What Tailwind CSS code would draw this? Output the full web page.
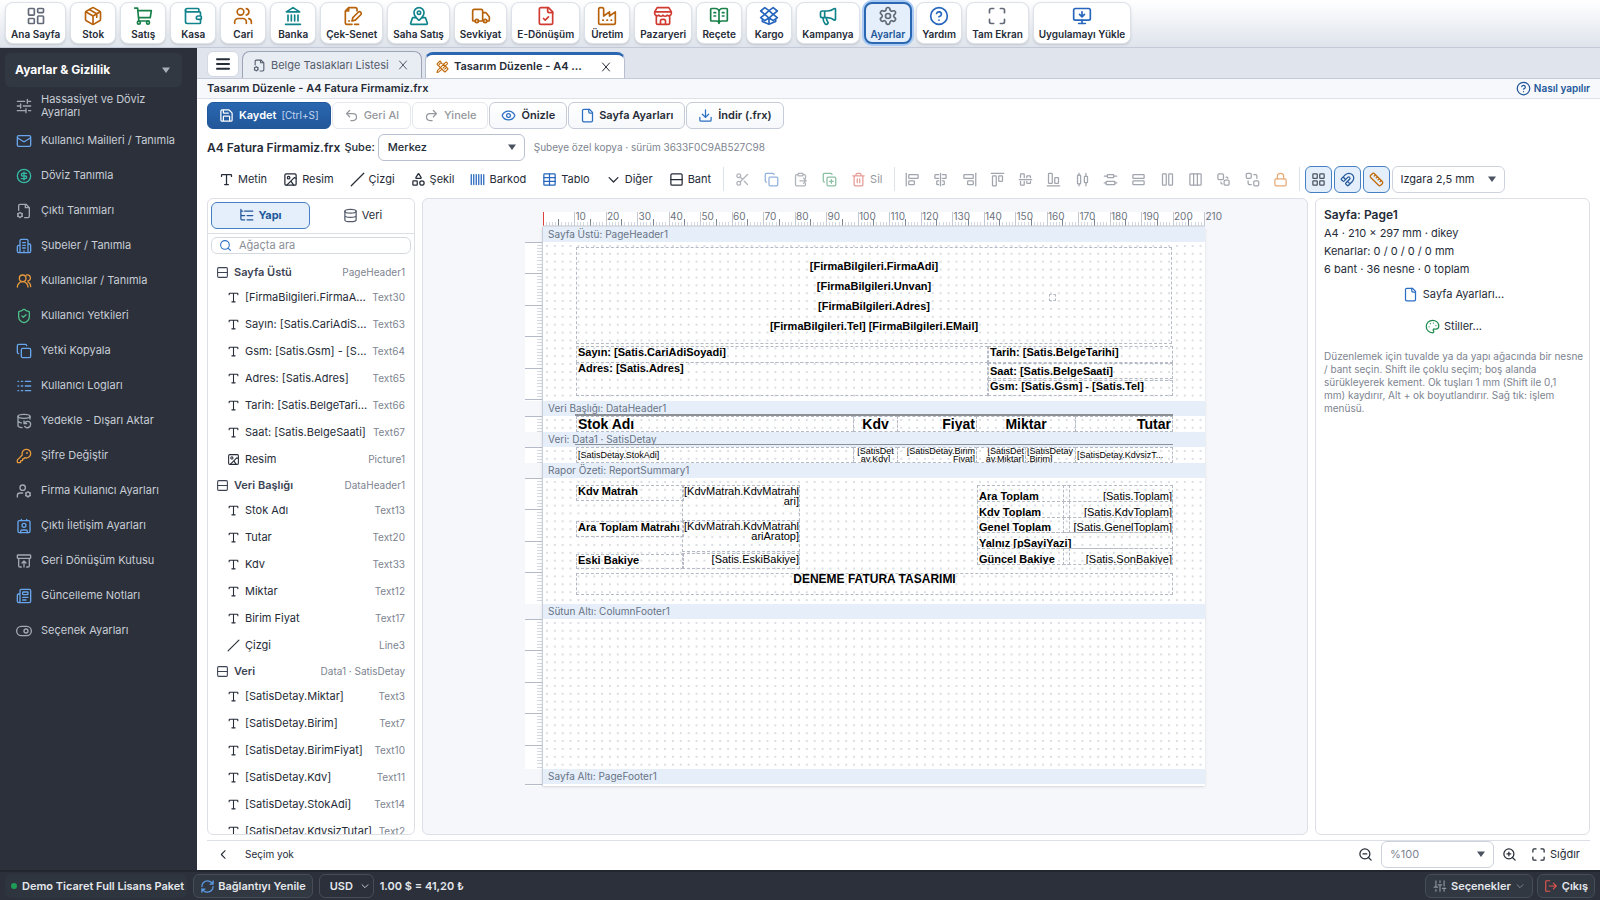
<!DOCTYPE html>
<html lang="tr">

<head>
    <meta charset="UTF-8">
    <meta name="viewport" content="width=device-width, initial-scale=1.0">
    <title>Tasarım Düzenle</title>
    <script src="https://cdn.jsdelivr.net/npm/@tailwindcss/browser@4"></script>
    <style>
        /* Shared stroke settings for every line icon */
        symbol {
            fill: none;
            stroke: currentColor;
            stroke-width: 2;
            stroke-linecap: round;
            stroke-linejoin: round;
        }
    </style>
</head>

<body class="h-screen flex flex-col overflow-hidden bg-white text-[#252b37] text-[11px] font-['Inter',sans-serif]">

    <!-- Icon sprite -->
    <svg class="hidden">
        <symbol id="i-home" viewBox="0 0 24 24"><rect x="3" y="3" width="7" height="8" rx="1"/><rect x="14" y="3" width="7" height="5" rx="1"/><rect x="14" y="12" width="7" height="9" rx="1"/><rect x="3" y="15" width="7" height="6" rx="1"/></symbol>
        <symbol id="i-box" viewBox="0 0 24 24"><path d="M21 8a2 2 0 0 0-1-1.73l-7-4a2 2 0 0 0-2 0l-7 4A2 2 0 0 0 3 8v8a2 2 0 0 0 1 1.73l7 4a2 2 0 0 0 2 0l7-4A2 2 0 0 0 21 16Z"/><path d="m3.3 7 8.7 5 8.7-5M12 22V12M7.5 4.3l9 5.1v4"/></symbol>
        <symbol id="i-cart" viewBox="0 0 24 24"><circle cx="7" cy="20" r="1.8"/><circle cx="18" cy="20" r="1.8"/><path d="M2 2.5h3.5L7 18h12M6 5.5h16l-1.3 8.5H6.8"/></symbol>
        <symbol id="i-wallet" viewBox="0 0 24 24"><path d="M19 7V4a1 1 0 0 0-1-1H5a2 2 0 0 0 0 4h15a1 1 0 0 1 1 1v4h-3a2 2 0 0 0 0 4h3a1 1 0 0 0 1-1v-2a1 1 0 0 0-1-1"/><path d="M3 5v14a2 2 0 0 0 2 2h15a1 1 0 0 0 1-1v-4"/></symbol>
        <symbol id="i-users" viewBox="0 0 24 24"><circle cx="9" cy="7" r="4"/><path d="M2 21v-2a4 4 0 0 1 4-4h6a4 4 0 0 1 4 4v2M16 3.1a4 4 0 0 1 0 7.8M22 21v-2a4 4 0 0 0-3-3.9"/></symbol>
        <symbol id="i-bank" viewBox="0 0 24 24"><path d="M3 22h18M6 18v-7M10 18v-7M14 18v-7M18 18v-7M12 2l8 5H4z"/></symbol>
        <symbol id="i-cheque" viewBox="0 0 24 24"><path d="M18 6V4a2 2 0 0 0-2-2H8L4 6v14a2 2 0 0 0 2 2h6M8 18h1M4 6h4V2"/><path d="m12 18 1-4 6.500-6.500a2 2 0 0 1 3 3L16 17zM15 22h5"/></symbol>
        <symbol id="i-mappin" viewBox="0 0 24 24"><path d="M18 8c0 3.600-3.900 7.400-5.300 8.700a1 1 0 0 1-1.400 0C9.900 15.400 6 11.600 6 8a6 6 0 0 1 12 0"/><circle cx="12" cy="8" r="2"/><path d="M8.700 14H5a1 1 0 0 0-1 .7l-2 6a1 1 0 0 0 1 1.300h18a1 1 0 0 0 1-1.300l-2-6a1 1 0 0 0-1-.7h-3.700"/></symbol>
        <symbol id="i-truck" viewBox="0 0 24 24"><path d="M14 18V6a2 2 0 0 0-2-2H4a2 2 0 0 0-2 2v11a1 1 0 0 0 1 1h2M15 18H9M19 18h2a1 1 0 0 0 1-1v-3.600a1 1 0 0 0-.2-.6l-3.500-4.400a1 1 0 0 0-.8-.4H14"/><circle cx="17" cy="18" r="2"/><circle cx="7" cy="18" r="2"/></symbol>
        <symbol id="i-filecheck" viewBox="0 0 24 24"><path d="M15 2H6a2 2 0 0 0-2 2v16a2 2 0 0 0 2 2h12a2 2 0 0 0 2-2V7Z"/><path d="M14 2v4a2 2 0 0 0 2 2h4M9 15l2 2 4-4"/></symbol>
        <symbol id="i-factory" viewBox="0 0 24 24"><path d="M2 20a2 2 0 0 0 2 2h16a2 2 0 0 0 2-2V7l-7 5V7l-7 5V4a2 2 0 0 0-2-2H4a2 2 0 0 0-2 2ZM7 17h.5M12 17h.5M17 17h.5"/></symbol>
        <symbol id="i-store" viewBox="0 0 24 24"><path d="m5 2-3 5v2a3 3 0 0 0 5 2 3 3 0 0 0 5 0 3 3 0 0 0 5 0 3 3 0 0 0 5-2V7l-3-5ZM2 7h20M4 12v8a2 2 0 0 0 2 2h12a2 2 0 0 0 2-2v-8M9 22v-4a2 2 0 0 1 2-2h2a2 2 0 0 1 2 2v4"/></symbol>
        <symbol id="i-book" viewBox="0 0 24 24"><path d="M12 7v14M16 12h2M16 8h2M6 12h2M6 8h2M3 18a1 1 0 0 1-1-1V4a1 1 0 0 1 1-1h5a4 4 0 0 1 4 4 4 4 0 0 1 4-4h5a1 1 0 0 1 1 1v13a1 1 0 0 1-1 1h-6a3 3 0 0 0-3 3 3 3 0 0 0-3-3z"/></symbol>
        <symbol id="i-openbox" viewBox="0 0 24 24"><path d="m7 2 5 3.500L17 2l5 4-5 4-5-4.500L7 10 2 6zM12 14.500 7 10l-5 4 5 3.500zM12 14.500l5-4.500 5 4-5 3.500zM4 16v2.500l8 3.500 8-3.500V16M12 14.500V22"/></symbol>
        <symbol id="i-megaphone" viewBox="0 0 24 24"><path d="M11 6a13 13 0 0 0 8.400-2.800A1 1 0 0 1 21 4v12a1 1 0 0 1-1.600.8A13 13 0 0 0 11 14H5a2 2 0 0 1-2-2V8a2 2 0 0 1 2-2zM6 14a12 12 0 0 0 2.400 7.200 2 2 0 0 0 3.200-2.400A8 8 0 0 1 10 14M8 6v8"/></symbol>
        <symbol id="i-gear" viewBox="0 0 24 24"><path d="M9.700 4.100a2.300 2.300 0 0 1 4.600 0 2.300 2.300 0 0 0 3.300 1.900 2.300 2.300 0 0 1 2.300 4 2.300 2.300 0 0 0 0 3.900 2.300 2.300 0 0 1-2.300 4 2.300 2.300 0 0 0-3.300 1.900 2.300 2.300 0 0 1-4.600 0 2.300 2.300 0 0 0-3.300-1.900 2.300 2.300 0 0 1-2.300-4 2.300 2.300 0 0 0 0-3.900 2.300 2.300 0 0 1 2.300-4 2.300 2.300 0 0 0 3.300-1.900"/><circle cx="12" cy="12" r="3"/></symbol>
        <symbol id="i-help" viewBox="0 0 24 24"><circle cx="12" cy="12" r="10"/><path d="M9.100 9a3 3 0 0 1 5.800 1c0 2-3 3-3 3M12 17h.01"/></symbol>
        <symbol id="i-screen" viewBox="0 0 24 24"><path d="M8 3H5a2 2 0 0 0-2 2v3M21 8V5a2 2 0 0 0-2-2h-3M3 16v3a2 2 0 0 0 2 2h3M16 21h3a2 2 0 0 0 2-2v-3"/></symbol>
        <symbol id="i-install" viewBox="0 0 24 24"><rect x="2" y="3" width="20" height="14" rx="2"/><path d="m9 10 3 3 3-3M12 13V7M12 17v4M8 21h8"/></symbol>
        <symbol id="i-sliders" viewBox="0 0 24 24"><path d="M2 5h11M17 5h5M17 2v6M2 12h5M11 12h11M7 9v6M2 19h13M19 19h3M15 16v6"/></symbol>
        <symbol id="i-mail" viewBox="0 0 24 24"><rect x="2" y="4" width="20" height="16" rx="2"/><path d="m2.500 7.500 8.500 5.300a2 2 0 0 0 2 0l8.500-5.300"/></symbol>
        <symbol id="i-dollar" viewBox="0 0 24 24"><circle cx="12" cy="12" r="10"/><path d="M16 8h-6a2 2 0 1 0 0 4h4a2 2 0 1 1 0 4H8M12 18V6"/></symbol>
        <symbol id="i-filecog" viewBox="0 0 24 24"><path d="M4 11V4a2 2 0 0 1 2-2h9l5 5v13a2 2 0 0 1-2 2h-5M14 2v5h6"/><circle cx="6" cy="18" r="3.200"/><path d="M6 14v.5M6 21.500v.5M2.500 16l.5.300M9 19.700l.5.300M2.500 20l.5-.3M9 16.300l.5-.3"/></symbol>
        <symbol id="i-building" viewBox="0 0 24 24"><path d="M6 22V4a2 2 0 0 1 2-2h8a2 2 0 0 1 2 2v18M6 11H4a2 2 0 0 0-2 2v7a2 2 0 0 0 2 2h16a2 2 0 0 0 2-2v-9a2 2 0 0 0-2-2h-2M10 7h4M10 11h4M10 15h4M12 22v-3"/></symbol>
        <symbol id="i-usersround" viewBox="0 0 24 24"><circle cx="10" cy="8" r="5"/><path d="M2 21a8 8 0 0 1 16 0M18 12a4.500 4.500 0 0 0-2-9M18 13.500c3 1.500 4 4 4 7"/></symbol>
        <symbol id="i-shield" viewBox="0 0 24 24"><path d="M20 13c0 5-3.500 7.500-7.700 9a1 1 0 0 1-.6 0C7.500 20.500 4 18 4 13V6a1 1 0 0 1 1-1c2 0 4.500-1.200 6.200-2.700a1.200 1.200 0 0 1 1.600 0C14.500 3.800 17 5 19 5a1 1 0 0 1 1 1zM9 12l2 2 4-4"/></symbol>
        <symbol id="i-copy" viewBox="0 0 24 24"><rect x="8" y="8" width="14" height="14" rx="2"/><path d="M4 16a2 2 0 0 1-2-2V4a2 2 0 0 1 2-2h10a2 2 0 0 1 2 2"/></symbol>
        <symbol id="i-logs" viewBox="0 0 24 24"><path d="M3 5h1M3 12h1M3 19h1M8 5h2M8 12h2M8 19h2M14 5h8M14 12h8M14 19h8"/></symbol>
        <symbol id="i-dbbackup" viewBox="0 0 24 24"><ellipse cx="12" cy="5" rx="9" ry="3"/><path d="M3 12a9 3 0 0 0 5 2.700M21 9V5M3 5v14a9 3 0 0 0 6 2.900M12 12v4h4M13 20a5 5 0 0 0 9-3 4.500 4.500 0 0 0-4.500-4.500c-1.300 0-2.500.5-3.400 1.400L12 16"/></symbol>
        <symbol id="i-key" viewBox="0 0 24 24"><path d="M2.600 17.400A2 2 0 0 0 2 18.800V21a1 1 0 0 0 1 1h3a1 1 0 0 0 1-1v-1a1 1 0 0 1 1-1h1a1 1 0 0 0 1-1v-1a1 1 0 0 1 1-1h.2a2 2 0 0 0 1.400-.6l.8-.8a6.500 6.500 0 1 0-4-4z"/><circle cx="16.500" cy="7.500" r=".5"/></symbol>
        <symbol id="i-usercog" viewBox="0 0 24 24"><circle cx="10" cy="7" r="4"/><path d="M2 21v-2a4 4 0 0 1 4-4h4"/><circle cx="18" cy="17" r="3.200"/><path d="M18 13v.5M18 20.500v.5M14.500 15l.5.300M21 18.700l.5.300M14.500 19l.5-.3M21 15.300l.5-.3"/></symbol>
        <symbol id="i-contact" viewBox="0 0 24 24"><path d="M16 2v2M8 2v2M7 22v-2a2 2 0 0 1 2-2h6a2 2 0 0 1 2 2v2"/><circle cx="12" cy="11" r="3"/><rect x="3" y="4" width="18" height="18" rx="2"/></symbol>
        <symbol id="i-restore" viewBox="0 0 24 24"><rect x="2" y="3" width="20" height="5" rx="1"/><path d="M4 8v11a2 2 0 0 0 2 2h2M20 8v11a2 2 0 0 1-2 2h-2M9 15l3-3 3 3M12 12v9"/></symbol>
        <symbol id="i-news" viewBox="0 0 24 24"><path d="M18 14h-8M15 18h-5M4 22h16a2 2 0 0 0 2-2V4a2 2 0 0 0-2-2H8a2 2 0 0 0-2 2v16a2 2 0 0 1-4 0v-9a2 2 0 0 1 2-2h2"/><rect x="10" y="6" width="8" height="4" rx="1"/></symbol>
        <symbol id="i-toggle" viewBox="0 0 24 24"><rect x="1" y="5" width="22" height="14" rx="7"/><circle cx="15" cy="12" r="3"/></symbol>
        <symbol id="i-design" viewBox="0 0 24 24"><path d="m13 7 8.700 8.700c.4.400.4 1 0 1.400l-4.600 4.600a1 1 0 0 1-1.400 0L7 13M10.800 17.200 5 22l-3 1 1-4L18 4a2.500 2.500 0 0 1 3 3l-8 8M11 7 8.300 2.300a1 1 0 0 0-1.400 0L2.300 6.900a1 1 0 0 0 0 1.400L6.500 12M8 6l-2 2M18 15l-2 2"/></symbol>
        <symbol id="i-save" viewBox="0 0 24 24"><path d="M15.200 3a2 2 0 0 1 1.400.6l3.800 3.800a2 2 0 0 1 .6 1.400V19a2 2 0 0 1-2 2H5a2 2 0 0 1-2-2V5a2 2 0 0 1 2-2zM17 21v-7a1 1 0 0 0-1-1H8a1 1 0 0 0-1 1v7M7 3v4a1 1 0 0 0 1 1h7"/></symbol>
        <symbol id="i-undo" viewBox="0 0 24 24"><path d="M9 14 4 9l5-5M4 9h10.500a5.500 5.500 0 0 1 0 11H11"/></symbol>
        <symbol id="i-redo" viewBox="0 0 24 24"><path d="m15 14 5-5-5-5M20 9H9.500a5.500 5.500 0 0 0 0 11H13"/></symbol>
        <symbol id="i-eye" viewBox="0 0 24 24"><path d="M2 12.300a1 1 0 0 1 0-.7 10.800 10.800 0 0 1 20 0 1 1 0 0 1 0 .7 10.800 10.800 0 0 1-20 0"/><circle cx="12" cy="12" r="3"/></symbol>
        <symbol id="i-file" viewBox="0 0 24 24"><path d="M15 2H6a2 2 0 0 0-2 2v16a2 2 0 0 0 2 2h12a2 2 0 0 0 2-2V7Z"/><path d="M14 2v4a2 2 0 0 0 2 2h4"/></symbol>
        <symbol id="i-download" viewBox="0 0 24 24"><path d="M12 15V3M21 15v4a2 2 0 0 1-2 2H5a2 2 0 0 1-2-2v-4M7 10l5 5 5-5"/></symbol>
        <symbol id="i-text" viewBox="0 0 24 24"><path d="M12 4v16M4 7V5a1 1 0 0 1 1-1h14a1 1 0 0 1 1 1v2M9 20h6"/></symbol>
        <symbol id="i-image" viewBox="0 0 24 24"><rect x="3" y="3" width="18" height="18" rx="2"/><circle cx="9" cy="9" r="2"/><path d="m21 10-3-1L6 21M13 15l4 6"/></symbol>
        <symbol id="i-line" viewBox="0 0 24 24"><path d="M22 2 2 22"/></symbol>
        <symbol id="i-shapes" viewBox="0 0 24 24"><path d="M8.300 10a.7.7 0 0 1-.6-1.100L11.400 3a.7.7 0 0 1 1.200 0l3.700 5.900a.7.7 0 0 1-.6 1.100Z"/><rect x="3" y="14" width="7" height="7" rx="1"/><circle cx="17.500" cy="17.500" r="3.500"/></symbol>
        <symbol id="i-barcode" viewBox="0 0 24 24"><path d="M2 4v16M6 4v16M10 4v16M14 4v16M18 4v16M22 4v16"/></symbol>
        <symbol id="i-table" viewBox="0 0 24 24"><rect x="3" y="3" width="18" height="18" rx="1"/><path d="M12 3v18M3 9h18M3 15h18"/></symbol>
        <symbol id="i-down" viewBox="0 0 24 24"><path d="m5 9 7 7 7-7"/></symbol>
        <symbol id="i-left" viewBox="0 0 24 24"><path d="m15 19-7-7 7-7"/></symbol>
        <symbol id="i-band" viewBox="0 0 24 24"><rect x="3" y="3" width="18" height="18" rx="2"/><path d="M3 12h18"/></symbol>
        <symbol id="i-cut" viewBox="0 0 24 24"><circle cx="6" cy="6" r="3"/><circle cx="6" cy="18" r="3"/><path d="M8.100 8.100 12 12M20 4 8.100 15.900M14.800 14.800 20 20"/></symbol>
        <symbol id="i-paste" viewBox="0 0 24 24"><rect x="8" y="2" width="8" height="4" rx="1"/><path d="M16 4h2a2 2 0 0 1 2 2v4M8 4H6a2 2 0 0 0-2 2v14a2 2 0 0 0 2 2h12a2 2 0 0 0 2-2v-2M11 14h10M17 10l4 4-4 4"/></symbol>
        <symbol id="i-dup" viewBox="0 0 24 24"><rect x="8" y="8" width="14" height="14" rx="2"/><path d="M15 12v6M12 15h6M4 16a2 2 0 0 1-2-2V4a2 2 0 0 1 2-2h10a2 2 0 0 1 2 2"/></symbol>
        <symbol id="i-trash" viewBox="0 0 24 24"><path d="M3 6h18M19 6v14a2 2 0 0 1-2 2H7a2 2 0 0 1-2-2V6M8 6V4a2 2 0 0 1 2-2h4a2 2 0 0 1 2 2v2M10 11v6M14 11v6"/></symbol>
        <symbol id="i-al" viewBox="0 0 24 24"><path d="M2 2v20"/><rect x="6" y="4" width="15" height="6" rx="1"/><rect x="6" y="14" width="9" height="6" rx="1"/></symbol>
        <symbol id="i-ac" viewBox="0 0 24 24"><path d="M12 2v20M9 10H4a1 1 0 0 1-1-1V5a1 1 0 0 1 1-1h5M15 10h5a1 1 0 0 0 1-1V5a1 1 0 0 0-1-1h-5M9 20H7a1 1 0 0 1-1-1v-4a1 1 0 0 1 1-1h2M15 14h2a1 1 0 0 1 1 1v4a1 1 0 0 1-1 1h-2"/></symbol>
        <symbol id="i-ar" viewBox="0 0 24 24"><path d="M22 2v20"/><rect x="3" y="4" width="15" height="6" rx="1"/><rect x="9" y="14" width="9" height="6" rx="1"/></symbol>
        <symbol id="i-at" viewBox="0 0 24 24"><path d="M2 2h20"/><rect x="4" y="6" width="6" height="16" rx="1"/><rect x="14" y="6" width="6" height="9" rx="1"/></symbol>
        <symbol id="i-am" viewBox="0 0 24 24"><path d="M2 12h20M10 15v5a1 1 0 0 1-1 1H5a1 1 0 0 1-1-1v-5M10 9V4a1 1 0 0 0-1-1H5a1 1 0 0 0-1 1v5M20 15v2a1 1 0 0 1-1 1h-4a1 1 0 0 1-1-1v-2M14 9V7a1 1 0 0 1 1-1h4a1 1 0 0 1 1 1v2"/></symbol>
        <symbol id="i-ab" viewBox="0 0 24 24"><path d="M2 22h20"/><rect x="4" y="2" width="6" height="16" rx="1"/><rect x="14" y="9" width="6" height="9" rx="1"/></symbol>
        <symbol id="i-dh" viewBox="0 0 24 24"><rect x="4" y="5" width="5" height="14" rx="1"/><rect x="15" y="7" width="5" height="10" rx="1"/><path d="M6.500 2v3M6.500 19v3M17.500 2v5M17.500 17v5"/></symbol>
        <symbol id="i-dv" viewBox="0 0 24 24"><rect x="7" y="4" width="10" height="5" rx="1"/><rect x="5" y="15" width="14" height="5" rx="1"/><path d="M2 6.500h5M17 6.500h5M2 17.500h3M19 17.500h3"/></symbol>
        <symbol id="i-sw" viewBox="0 0 24 24"><rect x="3" y="4" width="18" height="6" rx="1"/><rect x="3" y="14" width="18" height="6" rx="1"/></symbol>
        <symbol id="i-sh" viewBox="0 0 24 24"><rect x="4" y="3" width="6" height="18" rx="1"/><rect x="14" y="3" width="6" height="18" rx="1"/></symbol>
        <symbol id="i-cols" viewBox="0 0 24 24"><rect x="3" y="3" width="18" height="18" rx="1"/><path d="M9 3v18M15 3v18"/></symbol>
        <symbol id="i-front" viewBox="0 0 24 24"><rect x="3" y="3" width="9" height="9" rx="2"/><path d="M16 8h1a2 2 0 0 1 2 2M8 16v1a2 2 0 0 0 2 2"/><rect x="13" y="13" width="8" height="8" rx="2"/></symbol>
        <symbol id="i-back" viewBox="0 0 24 24"><rect x="2" y="2" width="8" height="8" rx="2"/><rect x="14" y="14" width="8" height="8" rx="2"/><path d="M14 4h3a2 2 0 0 1 2 2v4M5 14v4a2 2 0 0 0 2 2h3"/></symbol>
        <symbol id="i-lock" viewBox="0 0 24 24"><rect x="3" y="11" width="18" height="11" rx="2"/><path d="M7 11V7a5 5 0 0 1 10 0v4"/></symbol>
        <symbol id="i-grid" viewBox="0 0 24 24"><rect x="3" y="3" width="7" height="7" rx="1"/><rect x="14" y="3" width="7" height="7" rx="1"/><rect x="14" y="14" width="7" height="7" rx="1"/><rect x="3" y="14" width="7" height="7" rx="1"/></symbol>
        <symbol id="i-magnet" viewBox="0 0 24 24"><path d="m12 15 4 4M2.350 10.650a1.200 1.200 0 0 0 0 1.700l2.300 2.300a1.200 1.200 0 0 0 1.700 0l6.030-6.030a1 1 0 1 1 3 3l-6.030 6.030a1.200 1.200 0 0 0 0 1.700l2.300 2.300a1.200 1.200 0 0 0 1.700 0l6.370-6.370A1 1 0 0 0 8.720 4.280zM5 8l4 4"/></symbol>
        <symbol id="i-ruler" viewBox="0 0 24 24"><path d="M2.700 8.700a2.400 2.400 0 0 1 0-3.400l2.600-2.600a2.400 2.400 0 0 1 3.400 0l12.600 12.600a2.400 2.400 0 0 1 0 3.400l-2.600 2.600a2.400 2.400 0 0 1-3.400 0zM14.500 12.500l2-2M11.500 9.500l2-2M8.500 6.500l2-2M17.500 15.500l2-2"/></symbol>
        <symbol id="i-tree" viewBox="0 0 24 24"><path d="M9 5h13M13 12h9M13 19h9M3 2v15a2 2 0 0 0 2 2h4M3 10a2 2 0 0 0 2 2h4M3 5h3"/></symbol>
        <symbol id="i-db" viewBox="0 0 24 24"><ellipse cx="12" cy="5" rx="9" ry="3"/><path d="M3 5v14a9 3 0 0 0 18 0V5M3 12a9 3 0 0 0 18 0"/></symbol>
        <symbol id="i-search" viewBox="0 0 24 24"><circle cx="11" cy="11" r="8"/><path d="m21 21-4.300-4.300"/></symbol>
        <symbol id="i-zoomout" viewBox="0 0 24 24"><circle cx="11" cy="11" r="8"/><path d="m21 21-4.300-4.300M8 11h6"/></symbol>
        <symbol id="i-zoomin" viewBox="0 0 24 24"><circle cx="11" cy="11" r="8"/><path d="m21 21-4.300-4.300M8 11h6M11 8v6"/></symbol>
        <symbol id="i-palette" viewBox="0 0 24 24"><path d="M12 22a10 10 0 0 1 0-20 10 9 0 0 1 10 9 5 5 0 0 1-5 5h-2.200a1.700 1.700 0 0 0-1.400 2.800l.3.400a1.700 1.700 0 0 1-1.700 2.800M13.500 6.500h.01M17.500 10.500h.01M6.500 12.500h.01M8.500 7.500h.01"/></symbol>
        <symbol id="i-sync" viewBox="0 0 24 24"><path d="M3 12a9 9 0 0 1 9-9 9.700 9.700 0 0 1 6.700 2.700L21 8M21 3v5h-5M21 12a9 9 0 0 1-9 9 9.700 9.700 0 0 1-6.700-2.700L3 16M8 16H3v5"/></symbol>
        <symbol id="i-vsliders" viewBox="0 0 24 24"><path d="M5 3v11M5 18v3M2 14h6M12 3v3M12 10v11M9 10h6M19 3v9M19 16v5M16 16h6"/></symbol>
        <symbol id="i-exit" viewBox="0 0 24 24"><path d="M10 3H4a1 1 0 0 0-1 1v16a1 1 0 0 0 1 1h6M9 12h12M16 7l5 5-5 5"/></symbol>
        <symbol id="i-x" viewBox="0 0 24 24"><path d="M19 4 5 20M5 4l14 16"/></symbol>
        <symbol id="i-menu" viewBox="0 0 24 24"><path d="M3 5h18M3 12h18M3 19h18" stroke-width="3"/></symbol>
        <symbol id="i-caret" viewBox="0 0 24 24"><path d="M4 7h16l-8 11z" fill="currentColor" stroke="none"/></symbol>
    </svg>

    <!-- Main module bar -->
    <nav id="modules" class="h-12 shrink-0 flex items-start gap-1 px-[5px] pt-[2px] border-b border-[#c3c9d6] bg-linear-to-b from-white to-[#dfe4ec]"></nav>

    <div class="flex-1 min-h-0 flex">
        <!-- Settings sidebar -->
        <aside class="w-[197px] shrink-0 bg-[#2b303a] text-[#c8cdd6] pt-[5px] pl-[5px] pr-[15px]">
            <button class="w-full h-[34px] mb-px px-[10px] rounded-md bg-[#323842] text-white text-[12px] font-bold flex items-center justify-between">
                Ayarlar &amp; Gizlilik
                <svg class="size-3 text-[#a9afb9]"><use href="#i-caret"/></svg>
            </button>
            <ul id="settings"></ul>
        </aside>

        <main class="flex-1 min-w-0 flex flex-col">
            <!-- Open documents -->
            <div class="h-[31px] shrink-0 flex items-end gap-[3px] px-[10px] bg-[#dfe4ed] border-b border-[#c3c9d6]">
                <button class="w-8 h-[26px] mb-px rounded-md bg-white border border-[#d3d8e2] flex items-center justify-center" aria-label="Menü"><svg class="size-4"><use href="#i-menu"/></svg></button>
                <div class="w-[180px] h-[27px] pl-[10px] pr-3 rounded-t-lg border border-b-0 border-[#9ba4b6] bg-[#e8ecf3] text-[#545c6b] flex items-center gap-[5px]">
                    <svg class="size-[13px] shrink-0"><use href="#i-filecog"/></svg>
                    <span class="flex-1 truncate">Belge Taslakları Listesi</span>
                    <button aria-label="Kapat"><svg class="size-3"><use href="#i-x"/></svg></button>
                </div>
                <div class="w-[200px] h-[26px] pl-[10px] pr-3 rounded-t-lg border border-b-0 border-t-3 border-t-[#2b67b0] border-[#b7bfce] bg-white font-semibold flex items-center gap-[5px]">
                    <svg class="size-[13px] shrink-0 text-[#c06a0a]"><use href="#i-design"/></svg>
                    <span class="w-32 truncate">Tasarım Düzenle - A4 Fatura Firmamiz.frx</span>
                    <button class="ml-auto" aria-label="Kapat"><svg class="size-3"><use href="#i-x"/></svg></button>
                </div>
            </div>

            <div class="h-5 shrink-0 px-[10px] flex items-center justify-between bg-[#f6f8fb] border-b border-[#dde1e9]">
                <h1 class="text-[11px] font-semibold">Tasarım Düzenle - A4 Fatura Firmamiz.frx</h1>
                <a href="#" class="flex items-center gap-[3px] text-[10px] font-semibold text-[#22579a]"><svg class="size-[15px]"><use href="#i-help"/></svg>Nasıl yapılır</a>
            </div>

            <div class="flex-1 min-h-0 px-[10px] pt-[3px] flex flex-col">
                <!-- File actions -->
                <div class="flex gap-px shrink-0">
                    <button class="h-[27px] px-[11px] rounded-md bg-linear-to-b from-[#2a67b0] to-[#22579a] border border-[#22579a] text-white font-semibold flex items-center gap-[5px]"><svg class="size-[15px]"><use href="#i-save"/></svg>Kaydet <span class="font-normal text-[10px] text-[#c5d8f0]">[Ctrl+S]</span></button>
                    <button disabled class="h-[27px] px-[11px] rounded-md border border-[#e4e7ed] text-[#94979d] font-medium flex items-center gap-[5px]"><svg class="size-[15px]"><use href="#i-undo"/></svg>Geri Al</button>
                    <button disabled class="h-[27px] px-[11px] rounded-md border border-[#e4e7ed] text-[#94979d] font-medium flex items-center gap-[5px]"><svg class="size-[15px]"><use href="#i-redo"/></svg>Yinele</button>
                    <button class="h-[27px] px-[11px] rounded-md border border-[#c5cbd8] bg-linear-to-b from-white to-[#f6f8fb] font-semibold flex items-center gap-[5px]"><svg class="size-[15px] text-[#2b6fc2]"><use href="#i-eye"/></svg>Önizle</button>
                    <button class="h-[27px] px-[11px] rounded-md border border-[#c5cbd8] bg-linear-to-b from-white to-[#f6f8fb] font-semibold flex items-center gap-1"><svg class="size-[15px] text-[#2b6fc2]"><use href="#i-file"/></svg>Sayfa Ayarları</button>
                    <button class="h-[27px] px-[11px] rounded-md border border-[#c5cbd8] bg-linear-to-b from-white to-[#f6f8fb] font-semibold flex items-center gap-[5px]"><svg class="size-[15px] text-[#2b6fc2]"><use href="#i-download"/></svg>İndir (.frx)</button>
                </div>

                <!-- Branch selection -->
                <div class="mt-[5px] flex items-center shrink-0">
                    <b class="text-[12px] font-semibold mr-1">A4 Fatura Firmamiz.frx</b>
                    <label for="branch" class="font-medium mr-[3px]">Şube:</label>
                    <div class="relative">
                        <select id="branch" class="appearance-none w-[147px] h-[27px] pl-[9px] rounded-md border border-[#b9c0d0] bg-white font-medium"><option>Merkez</option></select>
                        <svg class="size-3 absolute right-[7px] top-[7px] pointer-events-none text-[#4b5260]"><use href="#i-caret"/></svg>
                    </div>
                    <span class="ml-[9px] text-[10px] text-[#7d8490]">Şubeye özel kopya · sürüm 3633F0C9AB527C98</span>
                </div>

                <!-- Designer tools -->
                <div class="mt-1 h-7 flex items-center shrink-0">
                    <div id="inserts" class="flex pl-1"></div>
                    <div class="w-px h-6 bg-[#dde1e9] mx-1"></div>
                    <div id="edits" class="flex"></div>
                    <div class="w-px h-6 bg-[#dde1e9] mx-1"></div>
                    <div id="aligns" class="w-[396px] flex justify-between"></div>
                    <div class="w-px h-6 bg-[#dde1e9] ml-1 mr-[5px]"></div>
                    <div class="flex gap-0.5">
                        <button class="size-[27px] rounded-md border border-[#4580c4] bg-[#e5effb] flex items-center justify-center" aria-label="Izgara"><svg class="size-[15px] text-[#4b5260]"><use href="#i-grid"/></svg></button>
                        <button class="size-[27px] rounded-md border border-[#4580c4] bg-[#e5effb] flex items-center justify-center" aria-label="Yapış"><svg class="size-[15px] text-[#22579a]"><use href="#i-magnet"/></svg></button>
                        <button class="size-[27px] rounded-md border border-[#4580c4] bg-[#e5effb] flex items-center justify-center" aria-label="Cetvel"><svg class="size-[15px] text-[#c06a0a]"><use href="#i-ruler"/></svg></button>
                        <div class="relative">
                            <select aria-label="Izgara aralığı" class="appearance-none w-[113px] h-[27px] pl-2 rounded-md border border-[#cdd2dc] bg-white"><option>Izgara 2,5 mm</option></select>
                            <svg class="size-3 absolute right-[7px] top-[7px] pointer-events-none text-[#4b5260]"><use href="#i-caret"/></svg>
                        </div>
                    </div>
                </div>

                <div class="flex-1 min-h-0 mt-[5px] flex gap-[7px]">
                    <!-- Structure tree -->
                    <section class="w-[208px] shrink-0 rounded-md border border-[#dcdfe6] flex flex-col overflow-hidden">
                        <div class="flex gap-1 p-[3px] pb-1 border-b border-[#dcdfe6]">
                            <button class="flex-1 h-[27px] rounded-md border border-[#4580c4] bg-[#e5effb] text-[#22579a] font-bold flex items-center justify-center gap-1"><svg class="size-[15px]"><use href="#i-tree"/></svg>Yapı</button>
                            <button class="flex-1 h-[27px] flex items-center justify-center gap-1"><svg class="size-[15px] text-[#545c6b]"><use href="#i-db"/></svg>Veri</button>
                        </div>
                        <label class="mx-[3px] mt-[3px] h-[17px] shrink-0 px-[7px] rounded-md border border-[#d5d9e2] flex items-center gap-[7px]">
                            <svg class="size-[13px] shrink-0 text-[#2b6fc2]"><use href="#i-search"/></svg>
                            <input type="text" aria-label="Ağaçta ara" placeholder="Ağaçta ara" class="w-full outline-none placeholder:text-[#8b8f97]">
                        </label>
                        <ul id="tree" class="mt-1.5 min-h-0 overflow-hidden"></ul>
                    </section>

                    <!-- Report page -->
                    <section class="flex-1 min-w-0 rounded-md border border-[#dcdfe6] bg-[#f5f7fb] flex justify-center pt-[13px] overflow-hidden">
                        <div>
                            <div id="topRuler" class="ml-[18px] h-[15px]"></div>
                            <div id="bands"></div>
                        </div>
                    </section>

                    <!-- Page properties -->
                    <section class="w-[275px] shrink-0 rounded-md border border-[#dcdfe6] pl-2 pr-0.5 pt-[7px]">
                        <h2 class="text-[12px] leading-[18px] font-semibold">Sayfa: Page1</h2>
                        <p class="leading-[18px]">A4 · 210 × 297 mm · dikey</p>
                        <p class="leading-[18px]">Kenarlar: 0 / 0 / 0 / 0 mm</p>
                        <p class="leading-[18px]">6 bant · 36 nesne · 0 toplam</p>
                        <button class="mt-0.5 w-full h-7 pr-1 flex items-center justify-center gap-[5px]"><svg class="size-[15px] text-[#2b6fc2]"><use href="#i-file"/></svg>Sayfa Ayarları...</button>
                        <button class="mt-1 w-full h-7 pr-1 flex items-center justify-center gap-1"><svg class="size-[15px] text-[#1c8a4c]"><use href="#i-palette"/></svg>Stiller...</button>
                        <p class="mt-2.5 text-[10px] leading-[13px] text-[#7d8490]">Düzenlemek için tuvalde ya da yapı ağacında bir nesne / bant seçin. Shift ile çoklu seçim; boş alanda sürükleyerek kement. Ok tuşları 1 mm (Shift ile 0,1<br>mm) kaydırır, Alt + ok boyutlandırır. Sağ tık: işlem menüsü.</p>
                    </section>
                </div>

                <!-- Selection and zoom -->
                <div class="mt-[5px] h-[30px] shrink-0 border-t border-[#dcdfe6] flex items-center px-[10px] pb-0.5 text-[10px]">
                    <svg class="size-[13px] mr-[15px]"><use href="#i-left"/></svg>
                    Seçim yok
                    <div class="ml-auto flex items-center gap-2">
                        <button aria-label="Uzaklaştır"><svg class="size-[15px]"><use href="#i-zoomout"/></svg></button>
                        <div class="relative">
                            <select aria-label="Yakınlaştırma" class="appearance-none w-[113px] h-[27px] pl-2 rounded-md border border-[#cdd2dc] bg-white text-[11px] text-[#7d8490]"><option>%100</option></select>
                            <svg class="size-3 absolute right-[7px] top-[7px] pointer-events-none text-[#4b5260]"><use href="#i-caret"/></svg>
                        </div>
                        <button aria-label="Yakınlaştır"><svg class="size-[15px]"><use href="#i-zoomin"/></svg></button>
                        <button class="ml-1.5 flex items-center gap-1 text-[11px]"><svg class="size-[15px]"><use href="#i-screen"/></svg>Sığdır</button>
                    </div>
                </div>
            </div>
        </main>
    </div>

    <!-- Status bar -->
    <footer class="h-[30px] shrink-0 px-[5px] flex items-center gap-[6px] bg-[#2b303a] border-t-2 border-[#22262f] text-[#e4e7ec] font-semibold">
        <span class="h-6 pl-[6px] pr-[3px] rounded-md bg-[#2f353f] flex items-center gap-[5px]"><i class="size-1.5 rounded-full bg-[#1e9c58]"></i>Demo Ticaret Full Lisans Paket</span>
        <button class="h-6 px-[6px] rounded-md border border-[#474d58] bg-[#323842] flex items-center gap-[3px]"><svg class="size-[15px] text-[#5b9be6]"><use href="#i-sync"/></svg>Bağlantıyı Yenile</button>
        <div class="relative">
            <select aria-label="Para birimi" class="appearance-none w-[55px] h-6 pl-[10px] rounded-md border border-[#474d58] bg-[#2b303a]"><option>USD</option></select>
            <svg class="size-2.5 absolute right-1 top-[7px] pointer-events-none"><use href="#i-down"/></svg>
        </div>
        <span>1.00 $ = 41,20 ₺</span>
        <div class="ml-auto flex gap-1">
            <button class="h-6 px-[7px] rounded-md border border-[#474d58] bg-[#323842] flex items-center gap-1"><svg class="size-3.5 text-[#8d94a0]"><use href="#i-vsliders"/></svg>Seçenekler<svg class="size-2.5 text-[#8d94a0]"><use href="#i-down"/></svg></button>
            <button class="h-6 px-[6px] rounded-md border border-[#474d58] bg-[#323842] flex items-center gap-1"><svg class="size-3.5 text-[#e0564c]"><use href="#i-exit"/></svg>Çıkış</button>
        </div>
    </footer>

    <script>
        const orange = 'text-[#b8620b]', green = 'text-[#188048]', teal = 'text-[#11838a]', red = 'text-[#d03a31]', blue = 'text-[#2766bd]', gray = 'text-[#636a77]';

        const icon = (name, cls) => `<svg class="shrink-0 ${cls}"><use href="#i-${name}"/></svg>`;

        // Top modules
        const modules = [
            ['Ana Sayfa', 'home', gray], ['Stok', 'box', orange], ['Satış', 'cart', green], ['Kasa', 'wallet', teal],
            ['Cari', 'users', orange], ['Banka', 'bank', teal], ['Çek-Senet', 'cheque', orange], ['Saha Satış', 'mappin', teal],
            ['Sevkiyat', 'truck', orange], ['E-Dönüşüm', 'filecheck', red], ['Üretim', 'factory', orange], ['Pazaryeri', 'store', red],
            ['Reçete', 'book', green], ['Kargo', 'openbox', blue], ['Kampanya', 'megaphone', teal], ['Ayarlar', 'gear', gray],
            ['Yardım', 'help', blue], ['Tam Ekran', 'screen', gray], ['Uygulamayı Yükle', 'install', blue]
        ];
        document.getElementById('modules').innerHTML = modules.map(([label, name, color]) => {
            const state = label === 'Ayarlar' ? 'border-2 border-[#2b67b0] bg-[#e5effb] text-[#22579a] ring-2 ring-[#a9cbf3]' : 'border border-[#dde1e9] bg-white shadow-sm';
            return `<button class="h-[42px] min-w-[46px] px-[5px] rounded-lg flex flex-col items-center justify-center gap-px whitespace-nowrap text-[10px] leading-[14px] font-semibold ${state}">${icon(name, 'size-5 ' + color)}${label}</button>`;
        }).join('');

        // Sidebar entries
        const sky = 'text-[#68a5ec]', pale = 'text-[#a3a9b4]', amber = 'text-[#e89a3c]', mint = 'text-[#4cbf88]';
        const settings = [
            ['Hassasiyet ve Döviz<br>Ayarları', 'sliders', pale], ['Kullanıcı Mailleri / Tanımla', 'mail', sky], ['Döviz Tanımla', 'dollar', 'text-[#35b8a6]'],
            ['Çıktı Tanımları', 'filecog', pale], ['Şubeler / Tanımla', 'building', sky], ['Kullanıcılar / Tanımla', 'usersround', amber],
            ['Kullanıcı Yetkileri', 'shield', mint], ['Yetki Kopyala', 'copy', sky], ['Kullanıcı Logları', 'logs', sky],
            ['Yedekle - Dışarı Aktar', 'dbbackup', pale], ['Şifre Değiştir', 'key', amber], ['Firma Kullanıcı Ayarları', 'usercog', pale],
            ['Çıktı İletişim Ayarları', 'contact', sky], ['Geri Dönüşüm Kutusu', 'restore', pale], ['Güncelleme Notları', 'news', sky],
            ['Seçenek Ayarları', 'toggle', pale]
        ];
        document.getElementById('settings').innerHTML = settings.map(([label, name, color]) =>
            `<li><a href="#" class="h-[35px] pl-[11px] flex items-center gap-[9px] leading-[13px] whitespace-nowrap">${icon(name, 'size-4 ' + color)}<span>${label}</span></a></li>`
        ).join('');

        // Toolbar groups
        const inserts = [['Metin', 'text', ''], ['Resim', 'image', ''], ['Çizgi', 'line', ''], ['Şekil', 'shapes', ''], ['Barkod', 'barcode', blue], ['Tablo', 'table', blue], ['Diğer', 'down', ''], ['Bant', 'band', '']];
        document.getElementById('inserts').innerHTML = inserts.map(([label, name, color]) =>
            `<button class="h-[27px] px-2 flex items-center gap-1">${icon(name, 'size-[15px] ' + color)}${label}</button>`
        ).join('');

        const edits = [['cut', gray, ''], ['copy', blue, ''], ['paste', gray, ''], ['dup', green, ''], ['trash', red, 'Sil']];
        document.getElementById('edits').innerHTML = edits.map(([name, color, label]) =>
            `<button disabled class="h-[27px] min-w-[28px] px-[7px] flex items-center justify-center gap-1 opacity-50">${icon(name, 'size-[15px] ' + color)}${label}</button>`
        ).join('');

        const aligns = ['al', 'ac', 'ar', 'at', 'am', 'ab', 'dh', 'dv', 'sw', 'sh', 'cols', 'front', 'back', 'lock'];
        document.getElementById('aligns').innerHTML = aligns.map(name =>
            `<button disabled aria-label="${name}" class="w-7 h-[27px] flex items-center justify-center opacity-60">${icon(name, 'size-[15px] ' + (name === 'lock' ? 'text-[#d9741a]' : gray))}</button>`
        ).join('');

        // Structure tree: [icon, label, object name]
        const tree = [
            ['band', 'Sayfa Üstü', 'PageHeader1'], ['text', '[FirmaBilgileri.FirmaAdi]', 'Text30'], ['text', 'Sayın: [Satis.CariAdiSoyadi]', 'Text63'],
            ['text', 'Gsm: [Satis.Gsm] - [Satis.Tel]', 'Text64'], ['text', 'Adres: [Satis.Adres]', 'Text65'], ['text', 'Tarih: [Satis.BelgeTarihi]', 'Text66'],
            ['text', 'Saat: [Satis.BelgeSaati]', 'Text67'], ['image', 'Resim', 'Picture1'],
            ['band', 'Veri Başlığı', 'DataHeader1'], ['text', 'Stok Adı', 'Text13'], ['text', 'Tutar', 'Text20'], ['text', 'Kdv', 'Text33'],
            ['text', 'Miktar', 'Text12'], ['text', 'Birim Fiyat', 'Text17'], ['line', 'Çizgi', 'Line3'],
            ['band', 'Veri', 'Data1 · SatisDetay'], ['text', '[SatisDetay.Miktar]', 'Text3'], ['text', '[SatisDetay.Birim]', 'Text7'],
            ['text', '[SatisDetay.BirimFiyat]', 'Text10'], ['text', '[SatisDetay.Kdv]', 'Text11'], ['text', '[SatisDetay.StokAdi]', 'Text14'],
            ['text', '[SatisDetay.KdvsizTutar]', 'Text2']
        ];
        document.getElementById('tree').innerHTML = tree.map(([name, label, object]) => {
            const row = name === 'band' ? 'h-6 pl-2 font-semibold text-[#3c4454]' : 'h-[27px] pl-[19px]';
            return `<li class="${row} pr-[9px] flex items-center">${icon(name, 'size-[13px] mr-[5px]')}<span class="flex-1 truncate">${label}</span><span class="pl-[3px] text-[10px] font-normal text-[#7d8490]">${object}</span></li>`;
        }).join('');

        // Rulers
        const MM = 3.15;
        let ticks = '';
        for (let mm = 0; mm <= 210; mm++) {
            const size = mm % 10 === 0 ? 14 : mm % 5 === 0 ? 7 : 4;
            const color = mm === 0 ? '#e0403a' : mm % 10 === 0 ? '#c3c8d3' : mm % 5 === 0 ? '#7d8593' : '#d3d7df';
            ticks += `<line x1="${mm * MM}" x2="${mm * MM}" y1="${14 - size}" y2="14" stroke="${color}" shape-rendering="crispEdges"/>`;
            if (mm && mm % 10 === 0) ticks += `<text x="${mm * MM + 1}" y="8" fill="#6b7280" font-size="10">${mm}</text>`;
        }
        document.getElementById('topRuler').innerHTML = `<svg class="block w-[662px] h-[15px] overflow-visible"><rect width="662" height="14" fill="#fff"/>${ticks}<line x2="662" y1="14" y2="14" stroke="#c3c8d3"/></svg>`;

        function sideRuler(height) {
            let out = '';
            for (let mm = 0; mm * MM < height; mm++) {
                out += `<line x1="${mm % 10 ? 12 : 0}" x2="18" y1="${mm * MM}" y2="${mm * MM}" stroke="${mm % 10 ? '#d5d9e2' : '#b4bac7'}" shape-rendering="crispEdges"/>`;
            }
            return `<svg class="block w-[18px] overflow-visible" height="${height}"><rect width="18" height="${height}" fill="#fff"/>${out}</svg>`;
        }

        // Report objects: [x, y, width, height, text, classes]
        const bold = 'px-px font-bold text-[11px] leading-[10px]', head = 'px-px font-bold text-[14px] leading-[14px]', cell = 'px-px text-[9px] leading-[8px]', val = 'text-[11px] leading-[10px]';
        const bands = [
            ['Sayfa Üstü: PageHeader1', 159, [
                [33, 5, 596, 97, '[FirmaBilgileri.FirmaAdi]<br>[FirmaBilgileri.Unvan]<br>[FirmaBilgileri.Adres]<br>[FirmaBilgileri.Tel] [FirmaBilgileri.EMail]', 'font-bold text-[11px] leading-[20px] items-center justify-center text-center'],
                [33, 104, 412, 17, 'Sayın: [Satis.CariAdiSoyadi]', bold],
                [33, 120, 412, 34, 'Adres: [Satis.Adres]', bold],
                [445, 104, 185, 17, 'Tarih: [Satis.BelgeTarihi]', bold],
                [445, 121, 185, 16, 'Saat: [Satis.BelgeSaati]', bold + ' items-center'],
                [445, 138, 185, 16, 'Gsm: [Satis.Gsm] - [Satis.Tel]', bold],
                [506, 52, 7, 7, '', '']
            ]],
            ['Veri Başlığı: DataHeader1', 16, [
                [33, 0, 278, 16, 'Stok Adı', head],
                [310, 0, 45, 16, 'Kdv', head + ' justify-center'],
                [354, 0, 80, 16, 'Fiyat', head + ' justify-end'],
                [433, 0, 100, 16, 'Miktar', head + ' justify-center'],
                [532, 0, 98, 16, 'Tutar', head + ' justify-end']
            ]],
            ['Veri: Data1 · SatisDetay', 16, [
                [33, 0, 278, 16, '[SatisDetay.StokAdi]', cell + ' items-center'],
                [310, 0, 45, 16, '[SatisDet<br>ay.Kdv]', cell + ' items-center justify-center text-center'],
                [354, 0, 80, 16, '[SatisDetay.Birim<br>Fiyat]', cell + ' items-center justify-end text-right'],
                [433, 0, 50, 16, '[SatisDet<br>ay.Miktar]', cell + ' items-center justify-end text-right'],
                [482, 0, 51, 16, '[SatisDetay<br>.Birim]', cell + ' items-center'],
                [532, 0, 98, 16, '[SatisDetay.KdvsizT...', cell + ' items-center']
            ]],
            ['Rapor Özeti: ReportSummary1', 126, [
                [33, 7, 108, 16, 'Kdv Matrah', bold],
                [139, 7, 118, 36, '[KdvMatrah.KdvMatrahl<br>ari]', val + ' justify-end text-right'],
                [33, 43, 108, 16, 'Ara Toplam Matrahı', bold],
                [139, 42, 118, 32, '[KdvMatrah.KdvMatrahl<br>ariAratop]', val + ' justify-end text-right'],
                [33, 76, 108, 15, 'Eski Bakiye', bold],
                [139, 75, 118, 16, '[Satis.EskiBakiye]', val + ' justify-end'],
                [434, 7, 93, 17, 'Ara Toplam', bold + ' items-end'],
                [520, 7, 110, 17, '[Satis.Toplam]', val + ' items-end justify-end'],
                [434, 23, 93, 17, 'Kdv Toplam', bold + ' items-end'],
                [520, 23, 110, 17, '[Satis.KdvToplam]', val + ' items-end justify-end'],
                [434, 39, 93, 16, 'Genel Toplam', bold + ' items-end'],
                [520, 39, 110, 16, '[Satis.GenelToplam]', val + ' items-end justify-end'],
                [434, 54, 196, 17, 'Yalnız [pSayiYazi]', bold + ' items-end'],
                [434, 70, 93, 17, 'Güncel Bakiye', bold + ' items-end'],
                [520, 70, 110, 17, '[Satis.SonBakiye]', val + ' items-end justify-end'],
                [33, 95, 597, 22, 'DENEME FATURA TASARIMI', 'font-bold text-[12px] leading-[10px] justify-center']
            ]],
            ['Sütun Altı: ColumnFooter1', 150, []],
            ['Sayfa Altı: PageFooter1', 2, []]
        ];
        document.getElementById('bands').innerHTML = bands.map(([title, height, items], i) => {
            const objects = items.map(([x, y, w, h, text, cls]) =>
                `<div class="absolute flex overflow-hidden whitespace-nowrap border border-dashed border-[#b5bac5] text-black font-['Liberation_Sans',sans-serif] ${cls}" style="left:${x}px;top:${y}px;width:${w}px;height:${h}px"><span>${text}</span></div>`
            ).join('');
            // Separator lines sit on the top edge of the two data bands
            const rule = i === 1 ? '<div class="absolute left-8 -top-0.5 w-[598px] h-0.5 bg-[#8c9198]"></div>' : i === 2 ? '<div class="absolute left-8 -top-[3px] w-[598px] h-px bg-[#8c9198]"></div>' : '';
            return `<div class="flex"><div class="w-[18px] pt-[15px]">${sideRuler(height)}</div>
                <div class="w-[663px] -ml-px border-l border-[#c9cedb] shadow-sm">
                    <div class="h-[15px] pl-[5px] bg-[#e5eef9] text-[10px] leading-[15px] text-[#687386]">${title}</div>
                    <div class="relative bg-white bg-[radial-gradient(circle,#c3c8d2_0.5px,transparent_1px)]" style="height:${height}px;background-size:${2.5 * MM}px ${2.5 * MM}px">${rule}${objects}</div>
                </div></div>`;
        }).join('');
    </script>
</body>

</html>
